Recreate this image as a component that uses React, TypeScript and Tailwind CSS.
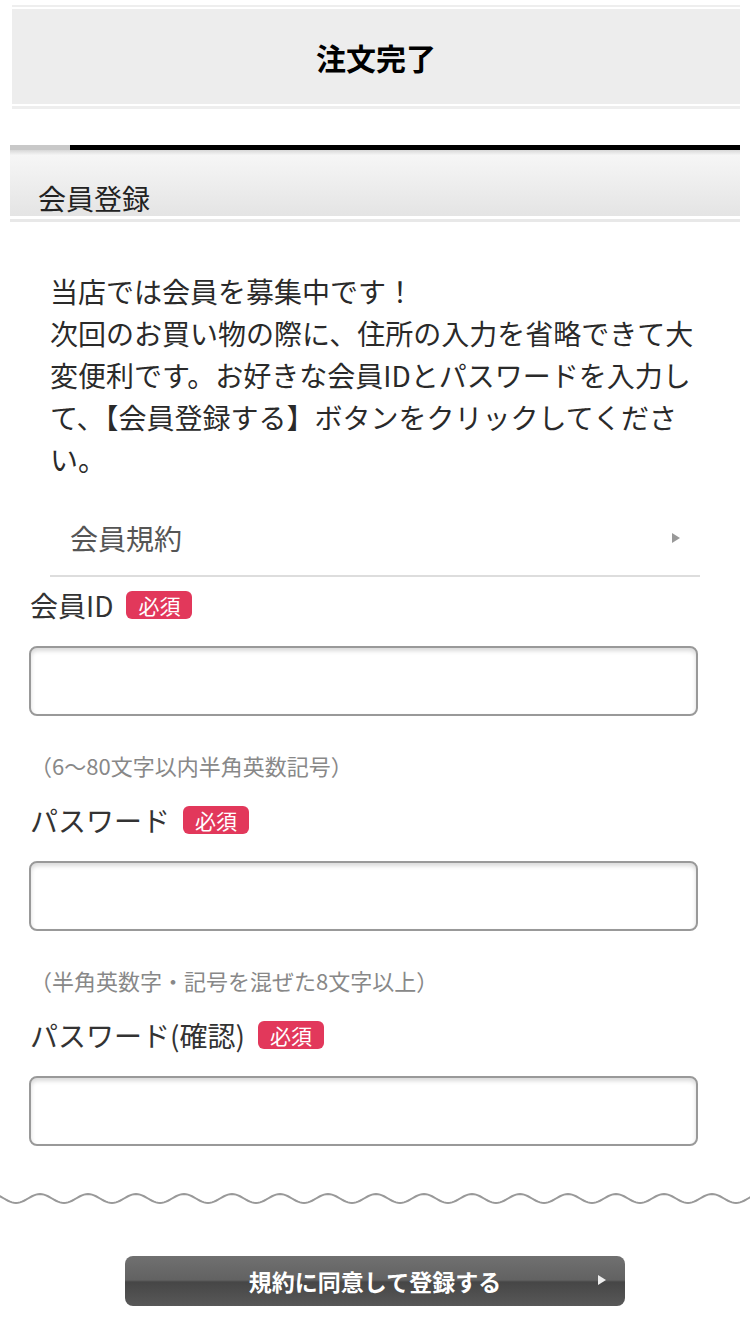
import * as React from "react"

const wavePath = () => {
  // sine wave, period 48px, peak-to-peak 9px
  let d = ""
  for (let x = -8; x <= 760; x += 2) {
    const y = 7.5 - 4.5 * Math.cos(((x + 8) / 48) * Math.PI * 2)
    d += (x === -8 ? "M" : "L") + x + " " + y.toFixed(2) + " "
  }
  return d
}

function Required() {
  return (
    <span className="ml-[13px] inline-flex h-[28px] w-[66px] items-center justify-center rounded-[6px] bg-[#e2385b] text-[21px] leading-none text-white">
      必須
    </span>
  )
}

function Field({ label, hint, first }: { label: string; hint?: string; first?: boolean }) {
  return (
    <div className={first ? "mt-[14px]" : "mt-[30px]"}>
      <div className="flex h-[28px] items-center pl-[1px]">
        <span className="text-[28px] leading-[28px] text-[#333]">{label}</span>
        <Required />
      </div>
      <div className="mt-[27px] h-[70px] rounded-[8px] border-2 border-[#999] bg-white shadow-[inset_0_3px_4px_rgba(0,0,0,0.15)]" />
      {hint && (
        <p className="mt-[38px] pl-[1px] text-[22px] leading-[22px] text-[#888]">{hint}</p>
      )}
    </div>
  )
}

export default function App() {
  return (
    <div
      className="min-h-[1334px] w-[750px] overflow-hidden bg-white"
      style={{ fontFamily: '"Noto Sans CJK JP", "Noto Sans", sans-serif' }}
    >
      {/* page title */}
      <div className="ml-[12px] mr-[10px] pt-[5px]">
        <div className="h-[2px] bg-[#eeeeee]" />
        <div className="mt-[2px] flex h-[95px] items-center justify-center bg-[#ededed]">
          <h1 className="text-[30px] font-bold leading-none text-black">注文完了</h1>
        </div>
        <div className="mt-[2px] h-[3px] bg-[#eeeeee]" />
      </div>

      {/* section header */}
      <div className="ml-[10px] mr-[10px] mt-[36px]">
        <div className="flex h-[5px]">
          <div className="w-[60px] bg-[#c8c8c8]" />
          <div className="flex-1 bg-black" />
        </div>
        <div className="h-[66px] bg-gradient-to-b from-[#d8d8d8] via-[#f6f6f6] via-[8%] to-[#e4e4e4] pl-[28px] pt-[34px]">
          <h2 className="text-[28px] leading-[28px] text-[#222]">会員登録</h2>
        </div>
        <div className="mt-[3px] h-[3px] bg-[#e8e8e8]" />
      </div>

      {/* intro */}
      <div className="w-[650px] pl-[50px] pt-[48px] box-content">
        <p className="text-[28px] leading-[42px] text-[#2a2a2a]">
          当店では会員を募集中です！
          <br />
          次回のお買い物の際に、住所の入力を省略できて大
          <br />
          変便利です。お好きな会員IDとパスワードを入力し
          <br />
          て、【会員登録する】ボタンをクリックしてくださ
          <br />
          い。
        </p>
        <div className="mt-[26px] flex h-[71px] items-center justify-between border-b-2 border-[#dddddd] pb-[6px] pl-[20px] pr-[20px]">
          <span className="text-[28px] leading-none text-[#555]">会員規約</span>
          <svg width="8" height="10" viewBox="0 0 8 10">
            <path d="M0 0 L8 5 L0 10 Z" fill="#999" />
          </svg>
        </div>
      </div>

      {/* form */}
      <div className="pl-[29px] pr-[52px]">
        <Field first label="会員ID" hint="（6〜80文字以内半角英数記号）" />
        <Field label="パスワード" hint="（半角英数字・記号を混ぜた8文字以上）" />
        <Field label="パスワード(確認)" />
      </div>

      {/* wave divider */}
      <svg className="mt-[45px] block" width="750" height="16" viewBox="0 0 750 16">
        <path d={wavePath()} fill="none" stroke="#999" strokeWidth="2" />
      </svg>

      {/* submit */}
      <div className="mt-[49px] flex justify-center">
        <button className="relative flex h-[50px] w-[500px] items-center justify-center rounded-[8px] bg-[linear-gradient(to_bottom,#707070_0%,#626262_48%,#464646_52%,#585858_100%)] text-[23px] font-bold text-white">
          規約に同意して登録する
          <svg className="absolute right-[19px] top-[19px]" width="8" height="10" viewBox="0 0 8 10">
            <path d="M0 0 L8 5 L0 10 Z" fill="#eee" />
          </svg>
        </button>
      </div>
    </div>
  )
}
